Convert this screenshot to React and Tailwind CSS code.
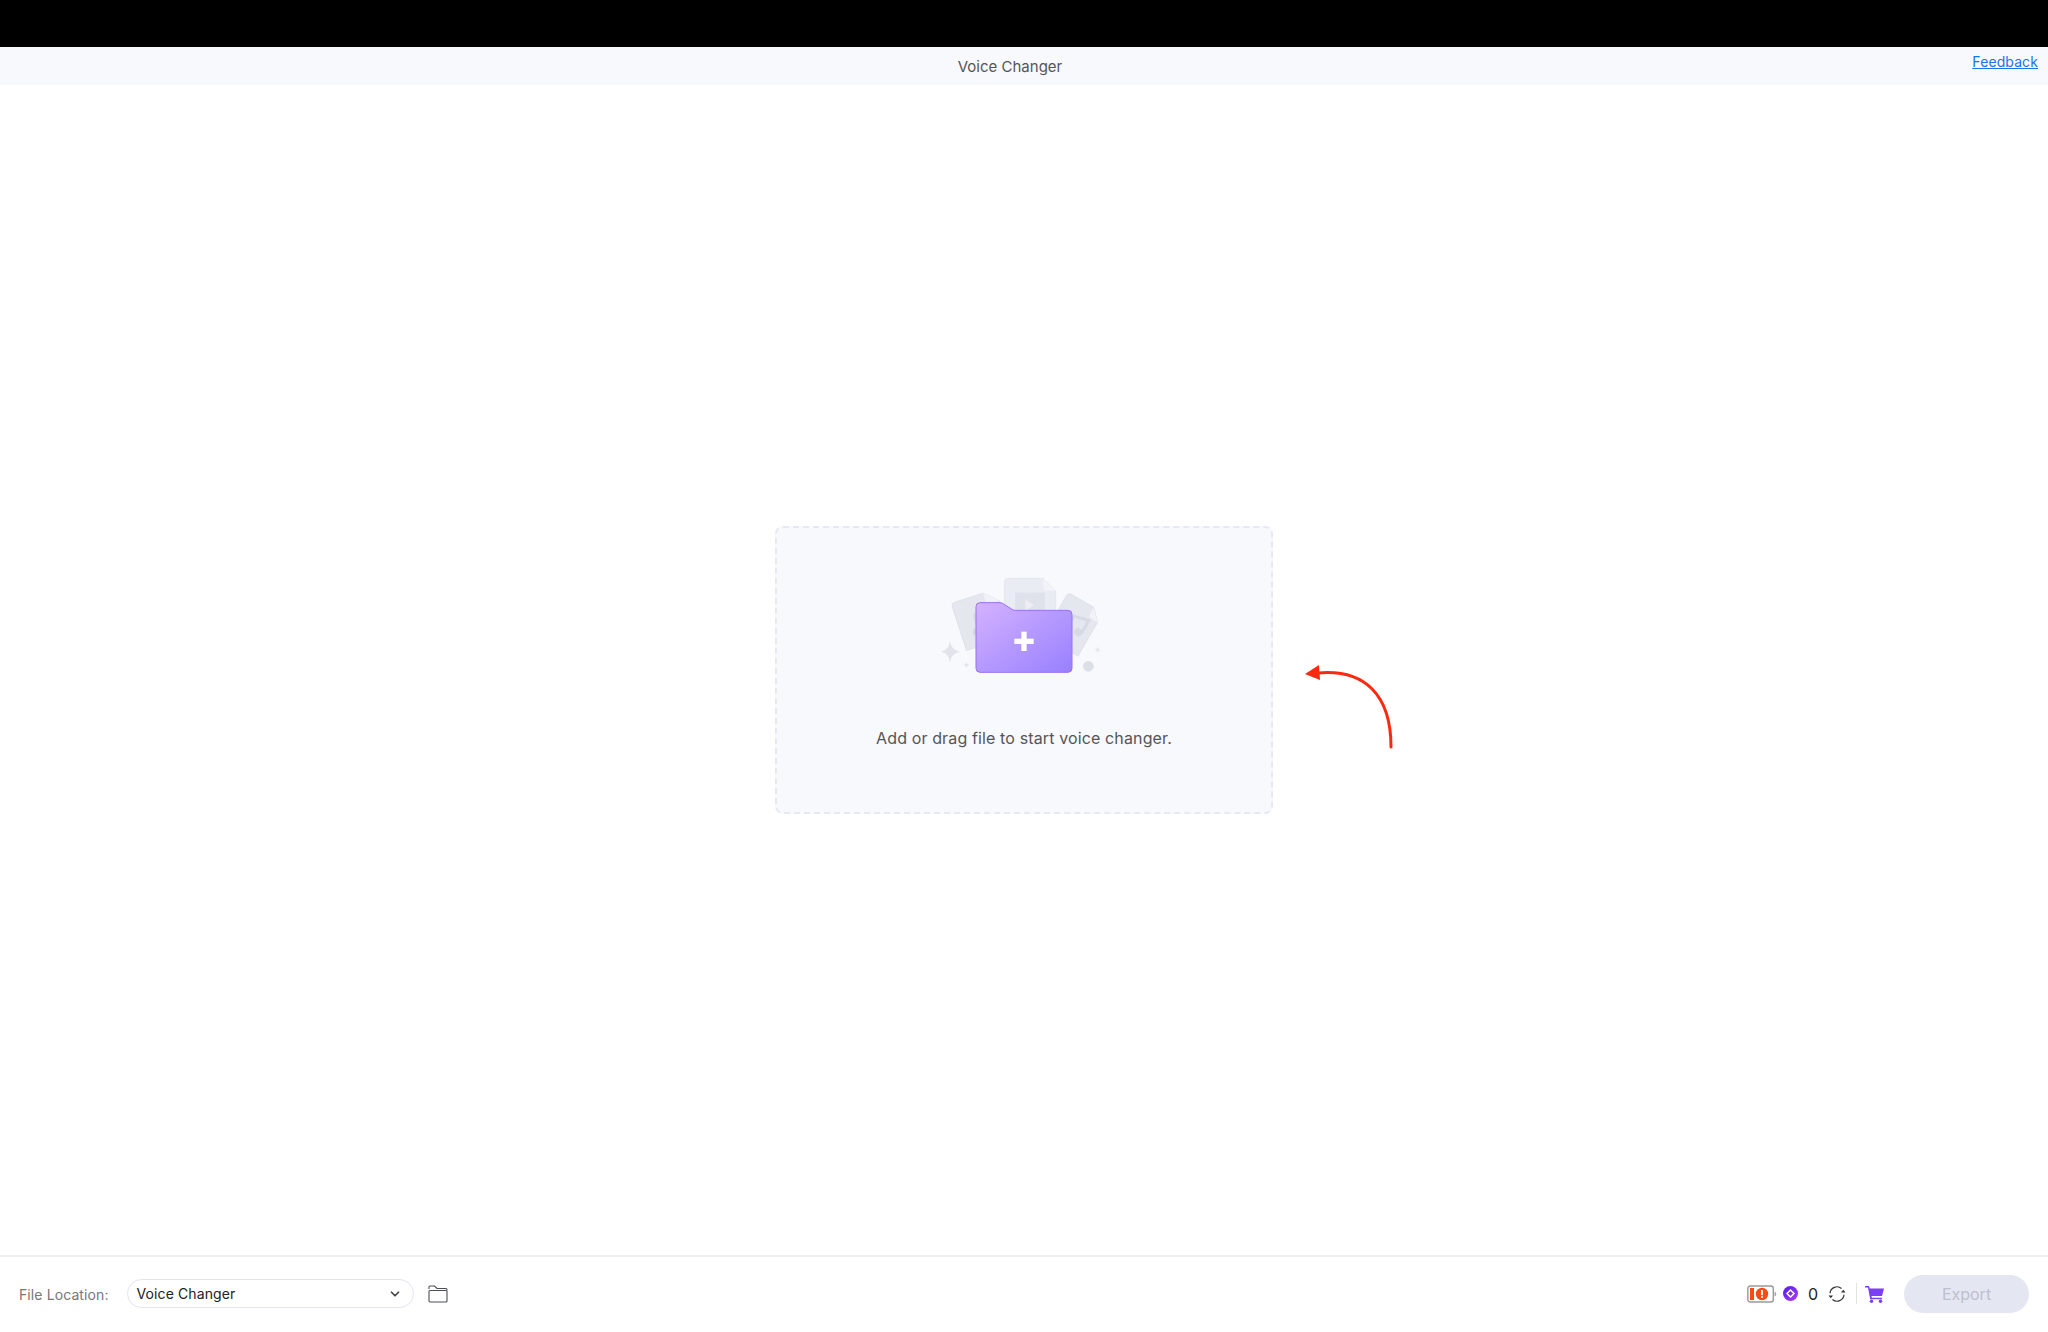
import { ChevronDown } from "lucide-react"

const FolderArt = () => (
  <svg viewBox="0 0 720 480" className="w-[240px] h-[160px] mr-2">
    <defs>
      <linearGradient id="folderFill" x1="0" y1="0" x2="1" y2="1">
        <stop offset="0" stopColor="#d4b2ff" />
        <stop offset="1" stopColor="#9880ff" />
      </linearGradient>
    </defs>
    {/* center doc */}
    <path d="M325 85H430L467 122V220H313V97Q313 85 325 85Z" fill="#e9ecf3" stroke="#e3e6ee" strokeWidth="3" />
    <path d="M430 85V110Q430 122 442 122H467Z" fill="#f1f3f8" />
    <rect x="345" y="128" width="90" height="70" fill="#dfe2ea" />
    <path d="M376 148L402 165L376 182Z" fill="#eceef4" />
    {/* left doc */}
    <g transform="translate(10 0) rotate(-18 235 215)">
      <path d="M177 135H265L305 172V283H165V147Q165 135 177 135Z" fill="#e4e7ee" stroke="#dfe2ea" strokeWidth="3" />
      <path d="M265 135V160Q265 172 277 172H305Z" fill="#f1f3f8" />
      <circle cx="212" cy="240" r="13" fill="#d7dae3" />
      <path d="M220 240V190L262 182V225" fill="none" stroke="#d7dae3" strokeWidth="9" />
    </g>
    {/* right doc */}
    <g transform="translate(505 128) rotate(30)">
      <path d="M10 0H88L120 33V150H0V10Q0 0 10 0Z" fill="#e4e7ee" stroke="#dfe2ea" strokeWidth="3" />
      <path d="M88 0V22Q88 33 99 33H120Z" fill="#f1f3f8" />
      <circle cx="40" cy="102" r="12" fill="#d7dae3" />
      <path d="M50 102V52L95 42V88" fill="none" stroke="#d7dae3" strokeWidth="9" />
      <circle cx="85" cy="88" r="12" fill="#d7dae3" />
    </g>
    {/* sparkles */}
    <path d="M150 273Q153 300 180 305Q153 310 150 336Q147 310 123 305Q147 300 150 273Z" fill="#e1e4ea" />
    <path d="M199 336Q200 344 208 345Q200 346 199 354Q198 346 190 345Q198 344 199 336Z" fill="#e1e4ea" />
    <path d="M593 289Q594 299 604 300Q594 301 593 311Q592 301 582 300Q592 299 593 289Z" fill="#e6e8ee" />
    <circle cx="565" cy="349" r="16" fill="#dcdfe6" />
    {/* folder */}
    <path
      d="M240 158H300Q306 158 311 162L336 178Q340 181 346 181H504Q516 181 516 193V355Q516 367 504 367H240Q228 367 228 355V170Q228 158 240 158Z"
      fill="url(#folderFill)"
      stroke="#9a6ff5"
      strokeWidth="3"
    />
    <rect x="343" y="266" width="58" height="16" fill="#fff" />
    <rect x="364" y="245" width="16" height="58" fill="#fff" />
  </svg>
)

const RedArrow = () => (
  <svg viewBox="0 0 130 110" className="absolute left-[1280px] top-[650px] w-[130px] h-[110px]">
    <path d="M38 23C85 19 111 45 111 97" fill="none" stroke="#fb2a0e" strokeWidth="3" strokeLinecap="round" />
    <path d="M25 24L39 15L40 30Z" fill="#fb2a0e" />
  </svg>
)

const BatteryIcon = () => (
  <svg viewBox="0 0 30 18" className="w-[30px] h-[18px]">
    <rect x="0.8" y="1" width="25.5" height="16" rx="2.5" fill="none" stroke="#9a9a9a" strokeWidth="1.4" />
    <path d="M27.5 6.5Q29.3 7 29.3 9Q29.3 11 27.5 11.5Z" fill="#a8a8a8" />
    <rect x="3" y="3" width="4" height="12" fill="#fa4b17" />
    <circle cx="15" cy="9" r="6.2" fill="#fa4b17" />
    <rect x="14.1" y="5" width="1.8" height="5.2" fill="#fff" />
    <rect x="14.1" y="11.1" width="1.8" height="1.8" fill="#fff" />
  </svg>
)

const CoinIcon = () => (
  <svg viewBox="0 0 15 15" className="w-[15px] h-[15px]">
    <defs>
      <linearGradient id="coinFill" x1="0" y1="0" x2="1" y2="1">
        <stop offset="0" stopColor="#4a1df0" />
        <stop offset="1" stopColor="#b43cf0" />
      </linearGradient>
    </defs>
    <circle cx="7.5" cy="7.5" r="7.5" fill="url(#coinFill)" />
    <path d="M7.5 4L11 7.5L7.5 11L4 7.5Z" fill="none" stroke="#fff" strokeWidth="1.5" />
  </svg>
)

const RefreshIcon = () => (
  <svg viewBox="0 0 18 18" className="w-[18px] h-[18px]" fill="none">
    <path d="M2 8.2A7 7 0 0 1 13.5 3.5" stroke="#333" strokeWidth="1.2" />
    <path d="M16 9.8A7 7 0 0 1 4.5 14.5" stroke="#333" strokeWidth="1.2" />
    <path d="M13 7.5H17.5L15.3 4.8Z" fill="#333" />
    <path d="M0.5 10.5H5L2.8 13.2Z" fill="#333" />
  </svg>
)

const CartIcon = () => (
  <svg viewBox="0 0 19 18" className="w-[19px] h-[18px]">
    <path d="M0 1H4L4.8 3.5H19L17 11H6.5L6.8 12.8H17V14.3H5.2L3 2.6H0Z" fill="#7a3ff5" />
    <circle cx="6.5" cy="16.2" r="1.7" fill="#7a3ff5" />
    <circle cx="15.5" cy="16.2" r="1.7" fill="#7a3ff5" />
  </svg>
)

const OpenFolderIcon = () => (
  <svg viewBox="0 0 20 18" className="w-5 h-[18px]" fill="none" stroke="#4b4f58" strokeWidth="1.1">
    <path d="M1 4V2Q1 1 2 1H6.5L9 3.5H18Q19 3.5 19 4.5V5.5" />
    <rect x="1" y="5.5" width="18" height="11.5" rx="1" />
  </svg>
)

export default function App() {
  return (
    <div className="relative flex flex-col h-[1332px] bg-white font-['Inter',sans-serif]">
      <div className="h-[47px] bg-black"></div>

      <div className="relative flex items-center justify-center h-[38px] pt-[3px] pr-7 bg-[#f7f9fd] text-[15px] text-[#555]">
        <span>Voice Changer</span>
        <a className="absolute right-[10px] top-[4px] text-[14px] tracking-[0.1px] text-[#1a73e8] underline">Feedback</a>
      </div>

      <div className="flex-1 flex items-center justify-center">
        <div className="flex flex-col items-center w-[498px] h-[288px] pt-[22px] bg-[#f8f9fd] border-2 border-dashed border-[#e6e8f3] rounded-lg">
          <FolderArt />
          <p className="mt-[16px] text-[16px] tracking-[0.13px] text-[#555]">Add or drag file to start voice changer.</p>
        </div>
      </div>

      <RedArrow />

      <div className="flex items-center justify-between h-[77px] pb-[2px] px-[19px] border-t-2 border-[#eceef1]">
        <div className="flex items-center">
          <span className="mt-[2px] text-[14px] tracking-[0.1px] text-[#777]">File Location:</span>
          <div className="flex items-center justify-between w-[287px] h-[29px] ml-[18px] pl-[9px] pr-[11px] border border-[#e2e4f0] rounded-full text-[14px] tracking-[0.1px] text-[#222]">
            <span>Voice Changer</span>
            <ChevronDown size={14} strokeWidth={3} className="text-[#444]" />
          </div>
          <div className="ml-[14px]">
            <OpenFolderIcon />
          </div>
        </div>

        <div className="flex items-center">
          <BatteryIcon />
          <div className="ml-[6px]">
            <CoinIcon />
          </div>
          <span className="ml-[10px] w-[9px] text-[16px] text-[#222]">0</span>
          <div className="ml-[11px]">
            <RefreshIcon />
          </div>
          <div className="w-px h-[21px] ml-[10px] bg-[#e3e3e3]"></div>
          <div className="ml-[8px]">
            <CartIcon />
          </div>
          <button className="w-[125px] h-[38px] ml-5 bg-[#e4e7f1] rounded-full text-[16px] text-[#bcbfd0]">Export</button>
        </div>
      </div>
    </div>
  )
}
